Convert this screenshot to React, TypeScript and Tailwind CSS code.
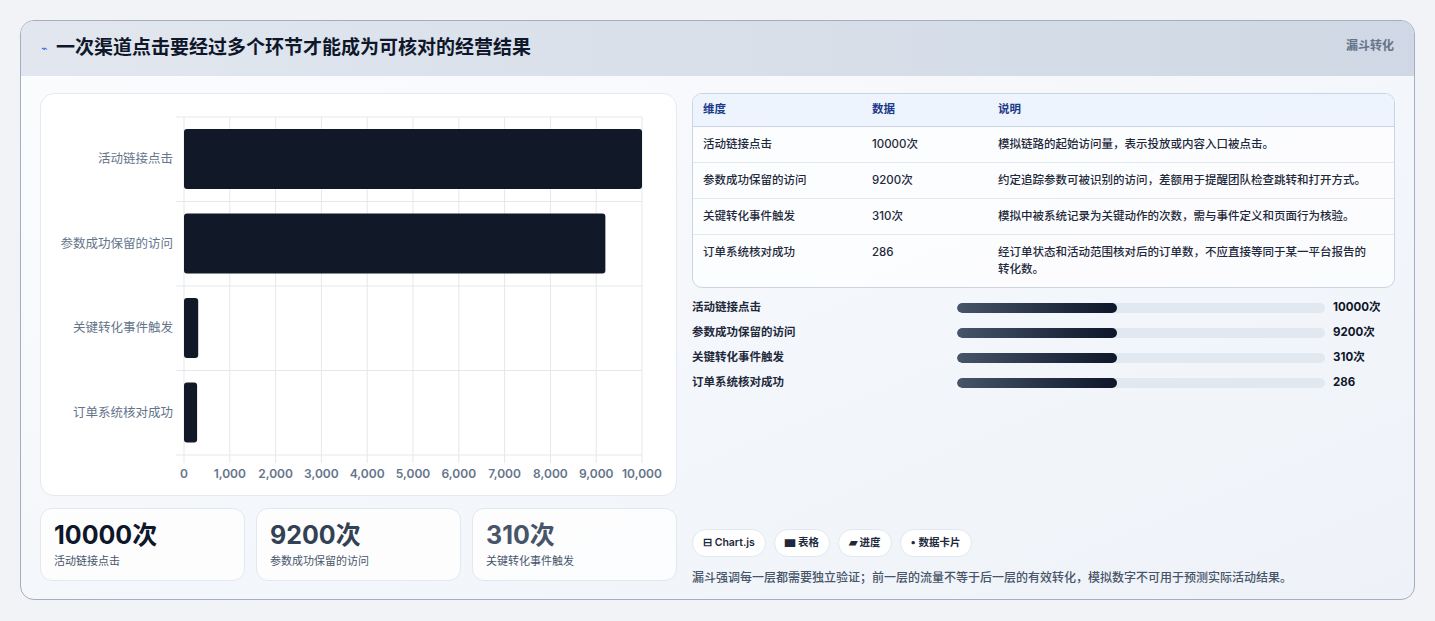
const rows = [
  { name: '活动链接点击', value: 10000, unit: '10000次', desc: '模拟链路的起始访问量，表示投放或内容入口被点击。' },
  { name: '参数成功保留的访问', value: 9200, unit: '9200次', desc: '约定追踪参数可被识别的访问，差额用于提醒团队检查跳转和打开方式。' },
  { name: '关键转化事件触发', value: 310, unit: '310次', desc: '模拟中被系统记录为关键动作的次数，需与事件定义和页面行为核验。' },
  { name: '订单系统核对成功', value: 286, unit: '286', desc: '经订单状态和活动范围核对后的订单数，不应直接等同于某一平台报告的转化数。' },
]

const Chart = () => {
  const x0 = 143, w = 458, y0 = 23, rh = 84.5
  const ticks = [0, 1000, 2000, 3000, 4000, 5000, 6000, 7000, 8000, 9000, 10000]
  return (
    <svg width="636" height="402" className="block">
      {ticks.map((t) => {
        const x = x0 + (w * t) / 10000
        return (
          <g key={t}>
            <line x1={x} y1={y0} x2={x} y2={y0 + rh * 4 + 8} stroke="#e5e7eb" />
            <text x={x} y={384} textAnchor="middle" fontSize="12" fontWeight="600" fill="#64748b">{t.toLocaleString('en-US')}</text>
          </g>
        )
      })}
      {[0, 1, 2, 3, 4].map((i) => (
        <line key={i} x1={x0 - 8} y1={y0 + rh * i} x2={x0 + w} y2={y0 + rh * i} stroke="#e5e7eb" />
      ))}
      {rows.map((r, i) => (
        <g key={r.name}>
          <rect x={x0} y={y0 + rh * i + 12} width={Math.max((w * r.value) / 10000, 13)} height={60} rx="3" fill="#111827" />
          <text x={132} y={y0 + rh * i + 46} textAnchor="end" fontSize="12.5" fill="#64748b">{r.name}</text>
        </g>
      ))}
    </svg>
  )
}

const App = () => {
  return (
    <div className="w-[1435px] h-[621px] bg-[#f1f3f6] pt-[20px] pl-[20px]" style={{ fontFamily: 'Inter, "Noto Sans CJK SC", sans-serif' }}>
      <div className="w-[1395px] h-[580px] rounded-[14px] border border-[#a5adc4] bg-gradient-to-br from-[#fbfcfe] to-[#eef2f8] overflow-hidden flex flex-col">
        <div className="h-[55px] shrink-0 bg-gradient-to-r from-[#e2e7ef] to-[#cfd8e4] flex items-start justify-between px-[20px]">
          <div className="flex items-center gap-[8px] h-[55px]">
            <span className="text-[11px] text-[#3b5bdb]">⌁</span>
            <h1 className="text-[19px] font-bold text-[#0f172a]">一次渠道点击要经过多个环节才能成为可核对的经营结果</h1>
          </div>
          <span className="text-[12px] font-semibold text-[#64748b] mt-[16px]">漏斗转化</span>
        </div>
        <div className="flex gap-[15px] px-[19px] pt-[17px]">
          <div className="w-[637px] flex flex-col gap-[12px]">
            <div className="h-[403px] bg-white rounded-[14px] border border-[#e5e9f0]">
              <Chart />
            </div>
            <div className="flex gap-[11px]">
              {rows.slice(0, 3).map((r, i) => (
                <div key={r.name} className="flex-1 h-[73px] bg-white/80 rounded-[12px] border border-[#e2e8f0] px-[13px] pt-[10px]">
                  <div className={`text-[25px] font-bold leading-[32px] ${i === 0 ? 'text-[#0f172a]' : i === 1 ? 'text-[#334155]' : 'text-[#475569]'}`}>{r.unit}</div>
                  <div className="text-[11px] text-[#475569] mt-[2px]">{r.name}</div>
                </div>
              ))}
            </div>
          </div>
          <div className="w-[705px] flex flex-col">
            <div className="rounded-[10px] border border-[#cbd5e1] overflow-hidden bg-white/70 text-[11.5px]">
              <div className="flex h-[33px] items-center bg-[#edf4fd] border-b border-[#cbd5e1] text-[#1e3a8a] font-semibold px-[10px]">
                <div className="w-[169px]">维度</div>
                <div className="w-[126px]">数据</div>
                <div className="flex-1">说明</div>
              </div>
              {rows.map((r, i) => (
                <div key={r.name} className={`flex px-[10px] py-[9px] text-[#1e293b] font-medium ${i < 3 ? 'border-b border-[#e2e8f0]' : ''}`}>
                  <div className="w-[169px] leading-[17px]">{r.name}</div>
                  <div className="w-[126px] leading-[17px]">{r.unit}</div>
                  <div className="flex-1 leading-[17px] pr-[8px]">{r.desc}</div>
                </div>
              ))}
            </div>
            <div className="flex flex-col gap-[8px] mt-[11px]">
              {rows.map((r) => (
                <div key={r.name} className="flex items-center h-[17px] text-[11.5px] font-semibold text-[#1e293b]">
                  <div className="w-[265px]">{r.name}</div>
                  <div className="w-[368px] h-[10px] rounded-full bg-[#e2e8f0] overflow-hidden">
                    <div className="w-[160px] h-full rounded-full bg-gradient-to-r from-[#475569] to-[#0f172a]" />
                  </div>
                  <div className="ml-[8px] font-bold text-[#0f172a]">{r.unit}</div>
                </div>
              ))}
            </div>
            <div className="flex gap-[8px] mt-[138px]">
              {['⊟ Chart.js', '▆ 表格', '▰ 进度', '• 数据卡片'].map((t) => (
                <span key={t} className="h-[28px] px-[10px] flex items-center rounded-full bg-white border border-[#e2e8f0] text-[10.5px] font-semibold text-[#1e293b]">{t}</span>
              ))}
            </div>
            <p className="mt-[12px] text-[12px] font-medium text-[#475569]">漏斗强调每一层都需要独立验证；前一层的流量不等于后一层的有效转化，模拟数字不可用于预测实际活动结果。</p>
          </div>
        </div>
      </div>
    </div>
  )
}

export default App
